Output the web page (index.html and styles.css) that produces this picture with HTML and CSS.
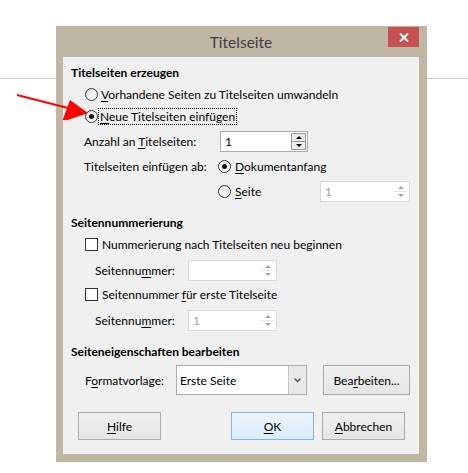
FILE: index.html
```html
<!DOCTYPE html>
<html lang="de">
<head>
    <meta charset="UTF-8">
    <meta name="viewport" content="width=device-width, initial-scale=1.0">
    <title>Titelseite</title>
    <link rel="stylesheet" href="styles.css">
</head>
<body>
    <svg class="arrow" width="100" height="40" viewBox="0 0 100 40">
        <line x1="17" y1="15" x2="68" y2="28" stroke="#ff0000" stroke-width="2"/>
        <polygon points="70,20 88,33 62,42" fill="#ff0000"/>
    </svg>

    <div class="dialog">
        <div class="titlebar">
            <span></span>
            <span class="title">Titelseite</span>
            <span class="close">
                <svg width="10" height="9" viewBox="0 0 10 9">
                    <path d="M1 0.5 L9 8.5 M9 0.5 L1 8.5" stroke="#fff" stroke-width="2"/>
                </svg>
            </span>
        </div>

        <div class="client">
            <div class="section">
                <div class="heading">Titelseiten erzeugen</div>
                <div class="opt"><span class="radio"></span><span class="lbl"><u>V</u>orhandene Seiten zu Titelseiten umwandeln</span></div>
                <div class="opt"><span class="radio checked"></span><span class="lbl focus"><u>N</u>eue Titelseiten einfügen</span></div>
                <div class="field">
                    <span class="flabel">Anzahl an <u>T</u>itelseiten:</span>
                    <div class="spin spin-count"><span class="val">1</span><span class="spinbtn"><i class="up"></i><i class="down"></i></span></div>
                </div>
                <div class="field">
                    <span class="flabel short">Titelseiten einfügen ab:</span>
                    <span class="radio checked"></span><span class="lbl"><u>D</u>okumentanfang</span>
                </div>
                <div class="field">
                    <span class="flabel short"></span>
                    <span class="radio"></span><span class="lbl page-lbl"><u>S</u>eite</span>
                    <div class="spin spin-page disabled"><span class="val">1</span><span class="spinbtn"><i class="up"></i><i class="down"></i></span></div>
                </div>
            </div>

            <div class="section">
                <div class="heading">Seitennummerierung</div>
                <div class="check-row"><span class="check"></span><span class="lbl">Nummerierung nach Titelseiten neu beginnen</span></div>
                <div class="sub">
                    <span class="sublabel">Seitennu<u>m</u>mer:</span>
                    <div class="spin spin-num disabled blank"><span class="val"></span><span class="spinbtn"><i class="up"></i><i class="down"></i></span></div>
                </div>
                <div class="check-row"><span class="check"></span><span class="lbl">Seitennummer <u>f</u>ür erste Titelseite</span></div>
                <div class="sub">
                    <span class="sublabel">Seitennu<u>m</u>mer:</span>
                    <div class="spin spin-num disabled"><span class="val">1</span><span class="spinbtn"><i class="up"></i><i class="down"></i></span></div>
                </div>
            </div>

            <div class="section">
                <div class="heading">Seiteneigenschaften bearbeiten</div>
                <div class="format-row">
                    <span class="formlabel">F<u>o</u>rmatvorlage:</span>
                    <div class="select">
                        <span class="val">Erste Seite</span>
                        <span class="drop">
                            <svg width="7" height="5" viewBox="0 0 7 5"><path d="M0.5 0.5 L3.5 3.5 L6.5 0.5" fill="none" stroke="#555" stroke-width="1.3"/></svg>
                        </span>
                    </div>
                    <span class="button">Bea<u>r</u>beiten...</span>
                </div>
            </div>

            <div class="buttons">
                <span class="button help"><u>H</u>ilfe</span>
                <span class="button default"><u>O</u>K</span>
                <span class="button"><u>A</u>bbrechen</span>
            </div>
        </div>
    </div>
</body>
</html>
```

FILE: styles.css
```css
body {
    margin: 0;
    font-family: Lato, sans-serif;
    font-size: 12px;
    color: #000;
    background: #fff linear-gradient(#cdcdcd, #cdcdcd) 0 78px / 100% 1px no-repeat;
}
u {
    text-decoration-thickness: 1px;
    text-underline-offset: 2px;
}
.arrow {
    position: absolute;
    left: 0;
    top: 80px;
}
.dialog {
    margin: 26px 0 0 56px;
    width: 371px;
    height: 436px;
    box-sizing: border-box;
    padding: 0 8px 8px 7px;
    background-color: #bfb7a4;
    display: flex;
    flex-direction: column;
}
.titlebar {
    height: 31px;
    display: grid;
    grid-template-columns: 31px 1fr 31px;
}
.title {
    font-size: 15.5px;
    color: #3f3f3f;
    text-align: center;
    line-height: 32px;
}
.close {
    margin-top: 1px;
    height: 20px;
    background-color: #c75050;
    display: flex;
    align-items: center;
    justify-content: center;
}
.client {
    flex: 1;
    background-color: #f0f0f0;
    padding: 7px 0 0 8px;
}
.section + .section {
    margin-top: 10px;
}
.heading {
    height: 18px;
    line-height: 18px;
    font-weight: bold;
    margin-bottom: 1px;
}
.opt, .check-row {
    height: 22px;
    display: flex;
    align-items: center;
    padding-left: 14px;
}
.opt .lbl {
    margin-left: 3px;
}
.focus {
    outline: 1px dotted #000;
    padding: 0 1px;
    line-height: 15px;
    margin-left: 1px !important;
}
.radio {
    width: 11px;
    height: 11px;
    border: 1px solid #333;
    border-radius: 50%;
    background: linear-gradient(#e6e6e6, #fff);
    display: flex;
    align-items: center;
    justify-content: center;
    flex: none;
}
.radio.checked::after {
    content: "";
    width: 5px;
    height: 5px;
    border-radius: 50%;
    background-color: #111;
}
.check {
    width: 11px;
    height: 11px;
    border: 1px solid #333;
    background-color: #fff;
    flex: none;
}
.check-row .lbl {
    margin-left: 4px;
}
.field {
    height: 25px;
    display: flex;
    align-items: center;
    padding-left: 13px;
}
.opt + .field {
    margin-top: 2px;
}
.flabel {
    width: 136px;
    flex: none;
}
.flabel.short {
    width: 134px;
}
.field .lbl {
    margin-left: 4px;
}
.page-lbl {
    width: 85px;
}
.spin {
    height: 21px;
    box-sizing: border-box;
    border: 1px solid #abadb3;
    background-color: #fff;
    display: flex;
    align-items: center;
    justify-content: space-between;
    padding: 0 1px 0 4px;
}
.spin-count {
    width: 88px;
}
.spin-page {
    width: 90px;
}
.spin-num {
    width: 89px;
}
.spin.disabled {
    border-color: #d9d9d9;
    color: #a0a0a0;
}
.spinbtn {
    width: 13px;
    height: 15px;
    border: 1px solid #9a9a9a;
    background-color: #ececec;
    display: flex;
    flex-direction: column;
}
.spinbtn i {
    flex: 1;
    display: flex;
    align-items: center;
    justify-content: center;
}
.spinbtn .up {
    border-bottom: 1px solid #9a9a9a;
}
.spinbtn .up::after {
    content: "";
    border-left: 3px solid transparent;
    border-right: 3px solid transparent;
    border-bottom: 3px solid #000;
}
.spinbtn .down::after {
    content: "";
    border-left: 3px solid transparent;
    border-right: 3px solid transparent;
    border-top: 3px solid #000;
}
.disabled .spinbtn {
    border-color: transparent;
    background-color: transparent;
}
.disabled .spinbtn .up {
    border-bottom-color: #e6e6e6;
}
.disabled .spinbtn .up::after {
    border-bottom-color: #a8a8a8;
}
.disabled .spinbtn .down::after {
    border-top-color: #a8a8a8;
}
.sub {
    height: 26px;
    display: flex;
    align-items: center;
    padding-left: 24px;
    margin-top: 2px;
}
.sublabel {
    width: 93px;
    flex: none;
}
.format-row {
    height: 30px;
    margin-top: 4px;
    display: flex;
    align-items: center;
    padding-left: 14px;
}
.formlabel {
    width: 91px;
    flex: none;
}
.select {
    width: 131px;
    height: 30px;
    box-sizing: border-box;
    border: 1px solid #abadb3;
    background-color: #fff;
    display: flex;
    align-items: stretch;
    margin-right: 16px;
}
.select .val {
    flex: 1;
    padding-left: 3px;
    display: flex;
    align-items: center;
}
.drop {
    width: 17px;
    border-left: 1px solid #c6c6c6;
    background-color: #e8e8e8;
    display: flex;
    align-items: center;
    justify-content: center;
}
.button {
    width: 87px;
    height: 30px;
    box-sizing: border-box;
    border: 1px solid #acacac;
    background: linear-gradient(#f0f0f0, #e5e5e5);
    display: flex;
    align-items: center;
    justify-content: center;
}
.buttons {
    margin-top: 17px;
    display: flex;
    gap: 8px;
    padding: 0 14px 0 7px;
}
.buttons .button {
    width: 83px;
    height: 28px;
}
.buttons .help {
    margin-right: auto;
}
.buttons .default {
    border-color: #7eb4ea;
    background: linear-gradient(#ecf4fc, #dcecfc);
}
```
